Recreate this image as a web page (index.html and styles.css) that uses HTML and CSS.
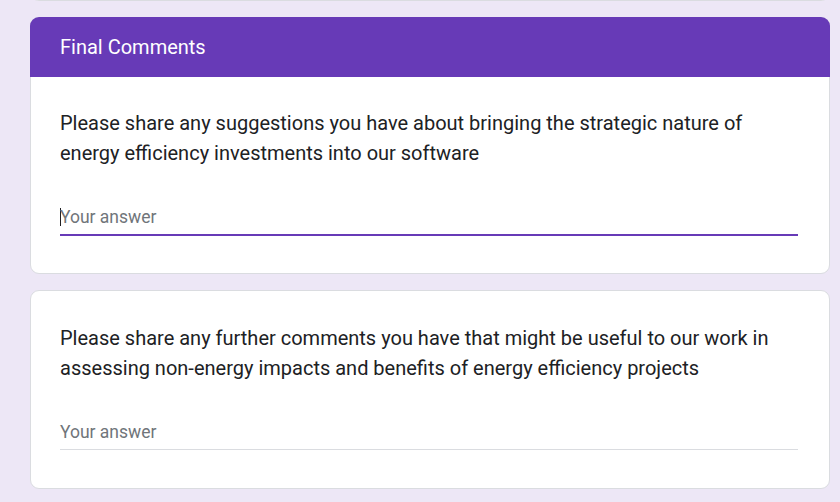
FILE: index.html
```html
<!DOCTYPE html>
<html>
<head>
<meta charset="utf-8">
<link rel="stylesheet" href="styles.css">
</head>
<body>
<div class="page">
  <div class="card prev"></div>

  <div class="card">
    <div class="card-header">Final Comments</div>
    <div class="card-body first">
      <div class="question">Please share any suggestions you have about bringing the strategic nature of energy efficiency investments into our software</div>
      <div class="answer focused"><span class="caret"></span><span class="placeholder">Your answer</span></div>
    </div>
  </div>

  <div class="card">
    <div class="card-body second">
      <div class="question">Please share any further comments you have that might be useful to our work in assessing non-energy impacts and benefits of energy efficiency projects</div>
      <div class="answer"><span class="placeholder">Your answer</span></div>
    </div>
  </div>
</div>
</body>
</html>
```

FILE: styles.css
```css
html, body {
  margin: 0;
  padding: 0;
  background: #ede7f6;
  font-family: Roboto, "Liberation Sans", sans-serif;
  overflow: hidden;
}

.page {
  width: 800px;
  padding-left: 30px;
  margin-top: -33px;
  display: flex;
  flex-direction: column;
  gap: 16px;
}

.card {
  background: #fff;
  border: 1px solid #dadce0;
  border-radius: 9px;
  box-sizing: border-box;
}

.card.prev {
  height: 34px;
}

.card-header {
  background: #673ab7;
  color: #fff;
  height: 60px;
  margin: -1px -1px 0 -1px;
  padding-left: 30px;
  display: flex;
  align-items: center;
  font-size: 20px;
  border-radius: 9px 9px 0 0;
}

.card-body {
  padding: 0 31px 0 29px;
}

.card-body.first {
  padding-top: 31px;
  padding-bottom: 37px;
}

.card-body.second {
  padding-top: 32px;
  padding-bottom: 38px;
}

.question {
  font-size: 20px;
  line-height: 30px;
  color: #202124;
}

.answer {
  margin-top: 38px;
  height: 29px;
  border-bottom: 1px solid #dadce0;
  display: flex;
  align-items: flex-start;
  box-sizing: border-box;
}

.answer.focused {
  border-bottom: 2px solid #673ab7;
  height: 30px;
}

.placeholder {
  font-size: 17.5px;
  line-height: 22px;
  color: #70757a;
}

.caret {
  width: 1px;
  height: 18px;
  margin-top: 2px;
  margin-right: -1px;
  background: #202124;
}
```
